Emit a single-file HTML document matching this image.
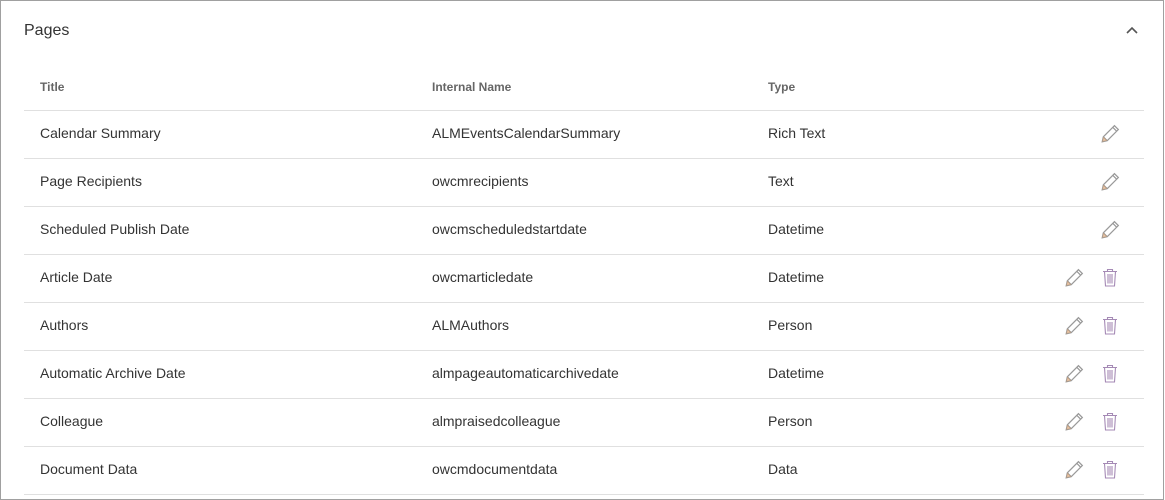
<!DOCTYPE html>
<html><head><style>
body{margin:0;width:1165px;height:493px;overflow:hidden;background:#fff;font-family:"Liberation Sans",Arial,sans-serif;}
.box{position:absolute;left:0;top:0;width:1164px;height:500px;border:1px solid #a0a0a0;box-sizing:border-box;}
.t{position:absolute;left:24px;top:22px;font-size:16px;color:#333;}
.chev{position:absolute;left:1125px;top:25px;}
.row{position:absolute;left:24px;width:1120px;height:47px;border-bottom:1px solid #e0e0e0;font-size:14px;color:#333;}
.row span{position:absolute;top:14px;}
.hd span{font-size:12px;font-weight:bold;color:#666;top:80px}
.c1{left:16px}.c2{left:408px}.c3{left:744px}
.ic{position:absolute;top:13px !important}
</style></head><body>
<div class="box"></div>
<div class="t">Pages</div>
<svg class="chev" width="14" height="10" viewBox="0 0 14 10"><path d="M2 8 L7 3 L12 8" stroke="#555" stroke-width="1.6" fill="none"/></svg>
<div class="hd" style="position:absolute;left:24px;top:0;width:1120px;height:110px;border-bottom:1px solid #e0e0e0;">
<span class="c1" style="position:absolute">Title</span><span class="c2" style="position:absolute">Internal Name</span><span class="c3" style="position:absolute">Type</span></div>
<div id="rows"></div>
<script>
const d=[["Calendar Summary","ALMEventsCalendarSummary","Rich Text",0],["Page Recipients","owcmrecipients","Text",0],["Scheduled Publish Date","owcmscheduledstartdate","Datetime",0],["Article Date","owcmarticledate","Datetime",1],["Authors","ALMAuthors","Person",1],["Automatic Archive Date","almpageautomaticarchivedate","Datetime",1],["Colleague","almpraisedcolleague","Person",1],["Document Data","owcmdocumentdata","Data",1]];
const pen='<svg width="20" height="20" viewBox="0 0 18 18"><path d="M2 16 L3 11.5 L13 1.5 L16.5 5 L6.5 15 Z M3 11.5 L6.5 15 M11.5 3 L15 6.5" stroke="#999" stroke-width="1.1" fill="none"/><path d="M2 16 L3 11.5 L6.5 15Z" fill="#d9a070" opacity=".6"/></svg>';
const trash='<svg width="18" height="20" viewBox="0 0 18 20"><path d="M2 3.5 H16 M6.5 3.5 V1.5 H11.5 V3.5 M3.5 3.5 L4.5 18 H13.5 L14.5 3.5 M7 6 V15.5 M9 6 V15.5 M11 6 V15.5" stroke="#a58ab5" stroke-width="1.1" fill="none"/></svg>';
let h='';d.forEach((r,i)=>{h+=`<div class="row" style="top:${111+i*48}px"><span class="c1">${r[0]}</span><span class="c2">${r[1]}</span><span class="c3">${r[2]}</span>`+(r[3]?`<span class="ic" style="left:1040px">${pen}</span><span class="ic" style="left:1077px">${trash}</span>`:`<span class="ic" style="left:1076px">${pen}</span>`)+`</div>`});
document.getElementById('rows').innerHTML=h;
</script>
</body></html>
